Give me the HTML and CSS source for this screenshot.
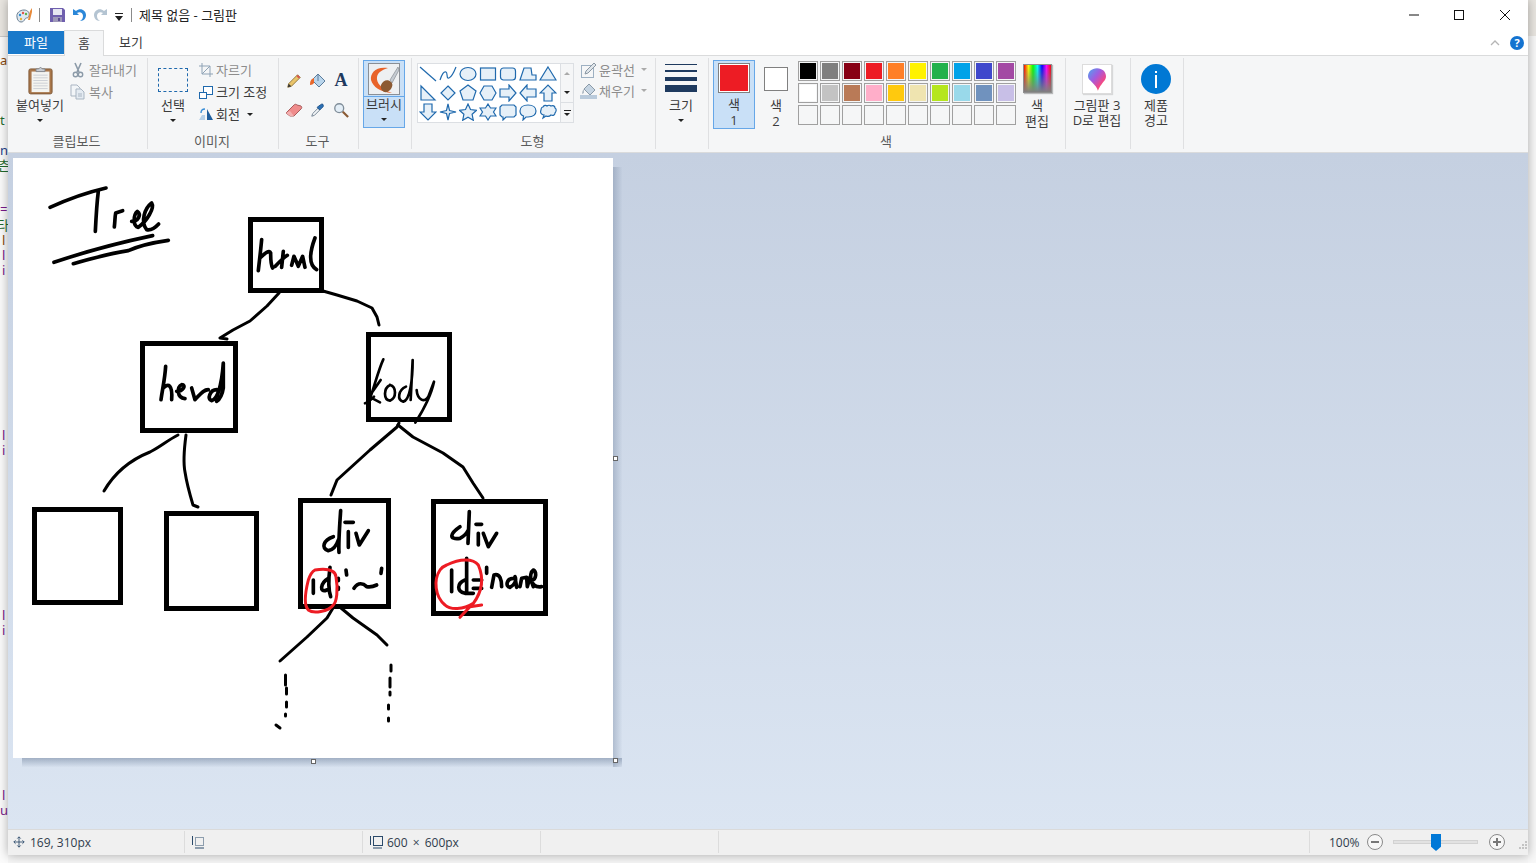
FILE: index.html
```html
<!DOCTYPE html>
<html lang="ko">
<head>
<meta charset="utf-8">
<title>제목 없음 - 그림판</title>
<link rel="stylesheet" href="styles.css">
</head>
<body>
<div class="desk">
  <svg class="sliver" width="8" height="863" viewBox="0 0 8 863">
    <text x="0" y="65" class="c-br">a</text>
    <text x="0" y="125" class="c-gr">t</text>
    <text x="0" y="155" class="c-bl">n</text>
    <text x="-2" y="170" class="c-gr">츤</text>
    <text x="0" y="214" class="c-pu">=</text>
    <text x="-3" y="230" class="c-gr">타</text>
    <text x="2" y="245" class="c-br">l</text>
    <text x="2" y="260" class="c-pu">l</text>
    <text x="2" y="275" class="c-pu">i</text>
    <text x="2" y="440" class="c-pu">l</text>
    <text x="2" y="455" class="c-pu">i</text>
    <text x="2" y="620" class="c-pu">l</text>
    <text x="2" y="635" class="c-pu">i</text>
    <text x="2" y="800" class="c-pu">l</text>
    <text x="0" y="815" class="c-pu">u</text>
  </svg>
  <div class="win">
    <header class="titlebar">
      <svg class="ic-app" width="17" height="17" viewBox="0 0 17 17"><path d="M1 10C0 6 4 3 8 3s6 3 5 6-3 1-4 3-2 3-4 3-4-2-4-5z" fill="#dfe8f0" stroke="#6b7f92"/><circle cx="4" cy="8" r="1.2" fill="#2d8fd5"/><circle cx="7" cy="6" r="1.2" fill="#e2534a"/><circle cx="10" cy="7" r="1.2" fill="#5cb04d"/><circle cx="5" cy="12" r="1.2" fill="#e8b23a"/><path d="M12 13l2-9 2-3 0 4-2 8z" fill="#e88a3a"/></svg>
      <span class="tsep"></span>
      <svg class="ic-save" width="15" height="14" viewBox="0 0 15 14"><path d="M0 0h13l2 2v12H0z" fill="#6f5fae"/><rect x="3" y="1" width="9" height="6" fill="#e6e6f2"/><rect x="3" y="9" width="9" height="5" fill="#9d97b8"/><rect x="8" y="10" width="2" height="3" fill="#5a4d92"/></svg>
      <svg class="ic-undo" width="14" height="14" viewBox="0 0 14 14"><path d="M1 1v6h6L5 5c3-2 6 0 6 3 0 2-1 4-3 5 4 0 6-3 6-6 0-5-6-8-10-4z" fill="#2b87d8"/></svg>
      <svg class="ic-redo" width="14" height="14" viewBox="0 0 14 14"><path d="M13 1v6H7l2-2C6 3 3 5 3 8c0 2 1 4 3 5-4 0-6-3-6-6 0-5 6-8 10-4z" fill="#b4c4d2"/></svg>
      <svg class="ic-qat" width="8" height="8" viewBox="0 0 8 8"><path d="M0 0h8v1H0zM0 3h8L4 8z" fill="#222"/></svg>
      <span class="tsep tsep2"></span>
      <span class="title">제목 없음 - 그림판</span>
      <div class="winbtns">
        <svg width="10" height="10" viewBox="0 0 10 10"><path d="M0 5h10" stroke="#111"/></svg>
        <svg width="10" height="10" viewBox="0 0 10 10"><rect x=".5" y=".5" width="9" height="9" fill="none" stroke="#111"/></svg>
        <svg class="ic-close" width="10" height="10" viewBox="0 0 10 10"><path d="M0 0l10 10M10 0L0 10" stroke="#111"/></svg>
      </div>
    </header>
    <nav class="tabs">
      <span class="tab tab-file">파일</span>
      <span class="tab tab-home">홈</span>
      <span class="tab tab-view">보기</span>
      <svg class="ic-collapse" width="10" height="6" viewBox="0 0 10 6"><path d="M1 5l4-4 4 4" fill="none" stroke="#b5b5b5" stroke-width="1.3"/></svg>
      <span class="help">?</span>
    </nav>
    <section class="ribbon">
      <div class="group g-clip">
        <div class="g-body">
          <div class="tall tall-clip">
            <div class="tall-ic">
              <svg width="25" height="31" viewBox="0 0 28 32"><rect x="1" y="3" width="26" height="28" rx="2" fill="#a9774a" stroke="#7a5432"/><rect x="4" y="6" width="20" height="23" fill="#f4f4f0"/><path d="M6 10h16M6 13h16M6 16h16M6 19h16M6 22h16M6 25h16" stroke="#c9ccd2"/><path d="M9 6V3h3l2-2 2 2h3v3z" fill="#c8ccd2" stroke="#80868e"/></svg>
            </div>
            <span>붙여넣기</span><i class="arrow"></i>
          </div>
          <div class="rows">
            <div class="row dim"><svg width="16" height="16" viewBox="0 0 16 16"><path d="M5 1l4 9M11 1L7 10" stroke="#8b9aa8" stroke-width="1.6"/><circle cx="5.500" cy="12.500" r="2.200" fill="none" stroke="#8b9aa8" stroke-width="1.400"/><circle cx="10.500" cy="12.500" r="2.200" fill="none" stroke="#8b9aa8" stroke-width="1.400"/></svg><span>잘라내기</span></div>
            <div class="row dim"><svg width="16" height="16" viewBox="0 0 16 16"><path d="M1 1h6l3 3v8H1z" fill="#f2f5f8" stroke="#a9b5c2"/><path d="M6 5h5l3 3v7H6z" fill="#e4ebf2" stroke="#a9b5c2"/><path d="M8 10h4M8 12h4" stroke="#a9b5c2"/></svg><span>복사</span></div>
          </div>
        </div>
        <div class="g-label">클립보드</div>
      </div>
      <div class="group g-image">
        <div class="g-body">
          <div class="tall tall-sel">
            <div class="tall-ic"><span class="dash"></span></div>
            <span>선택</span><i class="arrow"></i>
          </div>
          <div class="rows">
            <div class="row dim"><svg width="16" height="16" viewBox="0 0 16 16"><path d="M4 1v11h11M1 4h11v11" fill="none" stroke="#8fa3b6"/><path d="M4 12l8-8" stroke="#8fa3b6"/></svg><span>자르기</span></div>
            <div class="row"><svg width="16" height="16" viewBox="0 0 16 16"><rect x="5.500" y="2.500" width="9" height="8" fill="#fff" stroke="#1f69ad"/><rect x="1.500" y="8.500" width="7" height="6" fill="#fff" stroke="#1f69ad"/></svg><span>크기 조정</span></div>
            <div class="row"><svg width="16" height="16" viewBox="0 0 16 16"><path d="M9 3l6 11H9z" fill="#1f5f9e"/><path d="M1 14l3-5h3v5z" fill="#b5d0e8"/><path d="M3 7c0-3 2-4 4-4" fill="none" stroke="#3a8fd8" stroke-width="1.400"/></svg><span>회전</span><i class="arrow arrow-in"></i></div>
          </div>
        </div>
        <div class="g-label">이미지</div>
      </div>
      <div class="group g-tools">
        <div class="g-body tools">
          <svg width="16" height="16" viewBox="0 0 18 18"><path d="M2 16l1-4L13 2l3 3L6 15z" fill="#e9c46a" stroke="#8a6d2f"/><path d="M13 2l3 3-2 1-2-2z" fill="#d9534f"/><path d="M2 16l1-4 3 3z" fill="#333"/></svg>
          <svg width="18" height="18" viewBox="0 0 18 18"><path d="M9 2l7 7-6 6-7-7z" fill="#b9d5ec" stroke="#5c7d9c"/><path d="M9 2v7" stroke="#5c7d9c"/><path d="M1 13c0-4 1-6 4-7v5c-1 1-2 2-4 2z" fill="#e8682c"/></svg>
          <span class="tool-a">A</span>
          <svg width="18" height="16" viewBox="0 0 18 16"><path d="M1 11l8-8c1-1 2-1 3 0l4 1c1 1 1 2 0 3l-7 7H5z" fill="#ef8c8c" stroke="#a85c5c"/><path d="M1 11l4 3h4L5 9z" fill="#f3b0b0"/></svg>
          <svg width="16" height="16" viewBox="0 0 18 18"><path d="M2 16l1-3 6-6 2 2-6 6z" fill="#f1f4f7" stroke="#6b7c8c"/><path d="M8 6l4-3c1-1 3-1 3 1s-1 2-3 4l-1 1z" fill="#2a6fb4" stroke="#1b4f85"/></svg>
          <svg width="16" height="16" viewBox="0 0 18 18"><circle cx="7" cy="7" r="5" fill="#e3eef7" stroke="#7f8d99" stroke-width="1.500"/><path d="M11 11l6 6" stroke="#8a5a34" stroke-width="2.400"/></svg>
        </div>
        <div class="g-label">도구</div>
      </div>
      <div class="group g-brush">
        <div class="g-body">
          <div class="brushbtn">
            <div class="brush-top">
              <svg width="32" height="32" viewBox="0 0 32 32"><rect x=".5" y=".5" width="31" height="31" fill="#eef0f2" stroke="#8a8f96"/><path d="M20 5C8 3 2 10 3 17c2 7 9 12 21 13-10-4-16-10-15-16 1-5 5-7 11-9z" fill="#e8632a"/><path d="M22 17L30 4l1 3-7 13z" fill="#c5cbd2" stroke="#7b8087" stroke-width=".6"/><path d="M13 22c2-5 7-6 10-3 3 2 1 8-4 10-4 1-7-3-6-7z" fill="#8c5a33"/></svg>
            </div>
            <div class="brush-bot"><span>브러시</span><i class="arrow"></i></div>
          </div>
        </div>
        <div class="g-label">&nbsp;</div>
      </div>
      <div class="group g-shapes">
        <div class="g-body">
          <div class="gallery">
            <div class="shapes">
              <svg viewBox="0 0 18 18"><path d="M1 2l16 14"/></svg>
              <svg viewBox="0 0 18 18"><path class="nf" d="M1 15c2-6 4-9 6-8s0 7 3 6 5-6 7-11"/></svg>
              <svg viewBox="0 0 18 18"><ellipse cx="9" cy="9" rx="8" ry="6.500"/></svg>
              <svg viewBox="0 0 18 18"><rect x="1.500" y="3" width="15" height="12"/></svg>
              <svg viewBox="0 0 18 18"><rect x="1.500" y="3" width="15" height="12" rx="3"/></svg>
              <svg viewBox="0 0 18 18"><path d="M1 15L5 3h7l1 7h4v5z"/></svg>
              <svg viewBox="0 0 18 18"><path d="M9 2l8 13H1z"/></svg>
              <svg viewBox="0 0 18 18"><path d="M2 2l14 14H2z"/></svg>
              <svg viewBox="0 0 18 18"><path d="M9 2l7 7-7 7-7-7z"/></svg>
              <svg viewBox="0 0 18 18"><path d="M9 1l8 6-3 9H4L1 7z"/></svg>
              <svg viewBox="0 0 18 18"><path d="M5 2h8l4 7-4 7H5L1 9z"/></svg>
              <svg viewBox="0 0 18 18"><path d="M1 5h9V1l7 8-7 8v-4H1z"/></svg>
              <svg viewBox="0 0 18 18"><path d="M17 5H8V1L1 9l7 8v-4h9z"/></svg>
              <svg viewBox="0 0 18 18"><path d="M5 17V9H1l8-8 8 8h-4v8z"/></svg>
              <svg viewBox="0 0 18 18"><path d="M5 1v8H1l8 8 8-8h-4V1z"/></svg>
              <svg viewBox="0 0 18 18"><path d="M9 1l1.500 6.500L17 9l-6.500 1.500L9 17l-1.500-6.500L1 9l6.500-1.500z"/></svg>
              <svg viewBox="0 0 18 18"><path d="M9 1l2.500 5.500 6 .8-4.400 4 1.200 6L9 14.300 3.700 17.300l1.200-6-4.400-4 6-.8z"/></svg>
              <svg viewBox="0 0 18 18"><path d="M9 1l2.500 4H17l-2.500 4 2.500 4h-5.500L9 17l-2.500-4H1l2.500-4L1 5h5.500z"/></svg>
              <svg viewBox="0 0 18 18"><path d="M3 2h12l2 2v8l-2 2H7l-3 3v-3H3l-2-2V4z"/></svg>
              <svg viewBox="0 0 18 18"><path d="M9 2c5 0 8 2.500 8 6s-3 6-8 6H7l-3 3 .5-4C2 12 1 10 1 8c0-3.500 3-6 8-6z"/></svg>
              <svg viewBox="0 0 18 18"><path d="M4 4c1-2 3-2 4-1 1-1 3-1 4 0 2-1 4 0 4 2 2 1 1 4 0 5 0 2-2 3-4 2-1 1-3 2-5 1l-3 2 1-3c-3 0-4-3-3-5 0-2 1-3 2-3z"/></svg>
            </div>
            <div class="gscroll">
              <span class="gs gs-up"><i class="tri-up"></i></span>
              <span class="gs"><i class="arrow"></i></span>
              <span class="gs gs-more"><i class="bar"></i><i class="arrow"></i></span>
            </div>
          </div>
          <div class="sh-opts">
            <div class="row dim"><svg width="18" height="18" viewBox="0 0 18 18"><rect x="1.500" y="4.500" width="12" height="12" fill="none" stroke="#9db0c2"/><path d="M5 13l1-3 8-8 2 2-8 8z" fill="#dfe5ea" stroke="#8a97a3"/></svg><span>윤곽선</span><i class="arrow arrow-in arrow-dim"></i></div>
            <div class="row dim"><svg width="18" height="18" viewBox="0 0 18 18"><path d="M9 2l6 6-5 5-6-6z" fill="#c5d4e2" stroke="#8a9aa8"/><rect x="0" y="13" width="17" height="4" fill="#b9cadb"/><path d="M2 12c0-3 1-4 2-5v4z" fill="#b1bcc6"/></svg><span>채우기</span><i class="arrow arrow-in arrow-dim"></i></div>
          </div>
        </div>
        <div class="g-label">도형</div>
      </div>
      <div class="group g-size">
        <div class="g-body">
          <div class="tall tall-size">
            <div class="lines"><i class="l1"></i><i class="l2"></i><i class="l3"></i><i class="l4"></i></div>
            <span>크기</span><i class="arrow"></i>
          </div>
        </div>
        <div class="g-label">&nbsp;</div>
      </div>
      <div class="group g-colors">
        <div class="g-body">
          <div class="col1">
            <div class="sw1"><i></i></div>
            <span>색</span><span>1</span>
          </div>
          <div class="col2">
            <div class="sw2"></div>
            <span>색</span><span>2</span>
          </div>
          <div class="palette">
            <i class="cell"><b class="p1"></b></i><i class="cell"><b class="p2"></b></i><i class="cell"><b class="p3"></b></i><i class="cell"><b class="p4"></b></i><i class="cell"><b class="p5"></b></i><i class="cell"><b class="p6"></b></i><i class="cell"><b class="p7"></b></i><i class="cell"><b class="p8"></b></i><i class="cell"><b class="p9"></b></i><i class="cell"><b class="p10"></b></i>
            <i class="cell"><b class="p11"></b></i><i class="cell"><b class="p12"></b></i><i class="cell"><b class="p13"></b></i><i class="cell"><b class="p14"></b></i><i class="cell"><b class="p15"></b></i><i class="cell"><b class="p16"></b></i><i class="cell"><b class="p17"></b></i><i class="cell"><b class="p18"></b></i><i class="cell"><b class="p19"></b></i><i class="cell"><b class="p20"></b></i>
            <i class="cell"></i><i class="cell"></i><i class="cell"></i><i class="cell"></i><i class="cell"></i><i class="cell"></i><i class="cell"></i><i class="cell"></i><i class="cell"></i><i class="cell"></i>
          </div>
          <div class="coledit">
            <div class="rainbow"></div>
            <span>색</span><span>편집</span>
          </div>
        </div>
        <div class="g-label">색</div>
      </div>
      <div class="group g-p3d">
        <div class="g-body">
          <div class="coltxt">
            <div class="p3d-box">
              <svg width="18" height="25" viewBox="0 0 20 25"><defs><linearGradient id="p3" x1="0" y1="0" x2="1" y2="1"><stop offset="0" stop-color="#4aa8f0"/><stop offset=".4" stop-color="#a25be0"/><stop offset=".7" stop-color="#f0488a"/><stop offset="1" stop-color="#f8b020"/></linearGradient></defs><path d="M10 0c6 0 10 4 10 9 0 4-3 6-5 9-2 2-3 5-4 7-1-4-3-6-6-9C2 13 0 12 0 9c0-5 4-9 10-9z" fill="url(#p3)"/></svg>
            </div>
            <span>그림판 3</span><span>D로 편집</span>
          </div>
        </div>
        <div class="g-label">&nbsp;</div>
      </div>
      <div class="group g-warn">
        <div class="g-body">
          <div class="coltxt">
            <div class="info"><i class="info-dot"></i><i class="info-bar"></i></div>
            <span>제품</span><span>경고</span>
          </div>
        </div>
        <div class="g-label">&nbsp;</div>
      </div>
    </section>
    <main class="work">
      <div class="canvas">
        <svg class="draw" width="600" height="600" viewBox="13 158 600 600">
          <g class="ink">
            <rect class="box" x="250.500" y="219.500" width="71" height="71"/>
            <rect class="box" x="142.500" y="343.500" width="93" height="87"/>
            <rect class="box" x="368.500" y="334.500" width="81" height="85"/>
            <rect class="box" x="34.500" y="509.500" width="86" height="93"/>
            <rect class="box" x="166.500" y="513.500" width="90" height="95"/>
            <rect class="box" x="300.500" y="500.500" width="88" height="106"/>
            <rect class="box" x="433.500" y="501.500" width="112" height="112"/>
            <path d="M279 293L267 306 250 321 233 330 220 338 227 339"/>
            <path d="M323 291L337 295 357 301 372 308 377 317 379 325"/>
            <path d="M178 435C168 440 160 447 150 452 130 460 115 472 104 491"/>
            <path d="M186 435C184 450 183 462 185 472 187 485 190 495 193 505L198 507"/>
            <path d="M399 423L397 427 370 450 337 480 331 495"/>
            <path d="M398 425L413 437 443 453 463 467 473 483 483 498"/>
            <path d="M333 608L327 618 307 637 280 661"/>
            <path d="M341 608L353 618 377 635 387 645"/>
            <path d="M285.500 675V685M286.500 688V694M286.500 702V707M285.500 714V716M276 725L280 728"/>
            <path d="M391 665V671M390 678V687M390 692V695M388.500 705V709M388.500 718V721"/>
          </g>
          <g class="ink z" transform="translate(0 158) scale(.3333)">
            <path d="M150 148C190 130 240 108 318 90M295 100C290 140 288 180 286 220"/>
            <path d="M343 207C345 190 345 175 347 165L368 158"/>
            <path d="M395 190C415 190 425 170 412 160 400 170 398 205 415 208 440 190 465 150 455 135 435 150 420 190 440 215 455 218 465 210 476 198"/>
            <path d="M162 313C230 290 330 260 458 233M220 317C280 300 340 285 385 278 420 262 470 252 505 247"/>
            <path d="M785 245C782 280 778 310 775 338M780 300C795 285 808 275 812 285 812 300 812 320 818 330M826 325C838 312 850 300 862 292M850 280L845 328M875 322L882 295 895 325 908 295 915 328M945 240C930 280 925 320 950 335"/>
            <path d="M497 625C495 660 488 690 483 725M490 690C505 675 518 680 515 725M530 700C550 700 560 680 545 680 530 685 530 720 555 722M575 690L585 725C600 710 610 695 625 695M650 695C630 695 620 725 635 728 650 725 665 690 670 615L670 690C668 705 660 725 650 730"/>
          </g>
          <g class="ink z thin" transform="translate(300 200) scale(.3333)">
            <path d="M250 478C235 510 220 570 205 610M195 610C205 608 212 600 222 590M242 540L207 590 240 607M270 555C250 565 250 600 270 602 290 595 290 560 270 555M318 560C295 570 290 600 310 605 330 600 338 540 338 480L332 600M350 570C352 600 375 610 385 590L402 545C395 580 370 630 346 668"/>
          </g>
          <g class="ink z" transform="translate(270 490) scale(.3333)">
            <path d="M190 140C160 150 152 175 175 182 190 180 200 165 205 150M212 62C208 120 205 160 207 187M235 125V172M225 97H250M258 130L268 165 295 122"/>
            <path d="M130 270V310M180 232C175 270 175 300 182 320M175 265C150 280 148 310 170 300M205 265V272M205 292V298M228 240L230 255M252 295C265 275 280 280 290 290 300 292 310 290 320 285M335 235L333 250"/>
            <path d="M598 65L594 160M570 110C540 130 535 150 570 145 580 140 590 130 595 120M625 130V165M618 103H635M640 130L655 170 680 130"/>
            <path d="M545 240V305M590 205V305M585 270C560 280 560 305 585 310H610M610 270H635M610 295H635M650 232L650 250M665 292L672 255C690 250 695 270 695 290M730 265C710 265 705 290 720 292 735 285 740 270 735 260L740 292M750 290L755 265 770 262 772 290 780 262 790 290M785 270C800 270 800 245 790 240 775 250 780 295 815 290"/>
          </g>
          <g class="red z" transform="translate(270 490) scale(.3333)">
            <path d="M135 240C170 235 195 240 198 260 205 300 200 335 190 345 175 365 130 372 115 360 100 345 105 310 115 270 120 255 125 245 135 240"/>
            <path d="M530 225C570 205 610 205 625 225 640 260 640 300 610 340 580 360 540 360 525 345 495 320 490 270 510 240 515 232 522 228 530 225M635 345L600 350 570 382"/>
          </g>
        </svg>
        <i class="handle h-r"></i><i class="handle h-b"></i><i class="handle h-c"></i>
      </div>
    </main>
    <footer class="status">
      <div class="st st1"><svg width="12" height="12" viewBox="0 0 14 14"><path d="M7 1v12M1 7h12M5 3l2-2 2 2M5 11l2 2 2-2M3 5L1 7l2 2M11 5l2 2-2 2" fill="none" stroke="#2b4a6a"/></svg><span>169, 310px</span></div>
      <div class="st st2"><svg width="14" height="14" viewBox="0 0 14 14"><rect x="4.500" y="2.500" width="8" height="8" fill="none" stroke="#2b4a6a" stroke-dasharray="1 1"/><path d="M1.500 1v9M4 13h9" stroke="#2b4a6a"/></svg></div>
      <div class="st st3"><svg width="14" height="14" viewBox="0 0 14 14"><rect x="4.500" y="1.500" width="9" height="9" fill="none" stroke="#2b4a6a"/><path d="M1.500 1v9M4 13h9" stroke="#2b4a6a"/></svg><span class="dims">600 × 600px</span></div>
      <div class="st st4"></div>
      <div class="st st5"></div>
      <div class="st6">
        <span class="zoomtxt">100%</span>
        <span class="zbtn"><i class="zh"></i></span>
        <span class="track"><i class="thumb"></i></span>
        <span class="zbtn zplus"><i class="zh"></i><i class="zv"></i></span>
        <svg class="grip" width="10" height="10" viewBox="0 0 10 10"><path d="M7 1h2v2H7zM4 4h2v2H4zM7 4h2v2H7zM1 7h2v2H1zM4 7h2v2H4zM7 7h2v2H7z" fill="#c3c3c3"/></svg>
      </div>
    </footer>
  </div>
  <div class="rside"></div>
</div>
</body>
</html>
```
FILE: styles.css
```css
* { box-sizing: border-box; }
html, body { margin: 0; padding: 0; height: 100%; overflow: hidden; }
body { font-family: "Open Sans", "Noto Sans CJK KR", sans-serif; font-size: 13px; color: #3c3c3c; background: #fff; }
i { display: block; font-style: normal; }
svg { display: block; flex: none; }

.desk { display: flex; width: 1536px; height: 863px; background: #f6f6f6; overflow: hidden; }
.sliver { font: 13px "Noto Sans", "Noto Sans CJK KR", sans-serif; background: linear-gradient(#e9e6e1 36px, #c9c9c9 36px, #c9c9c9 37px, #fbfbfb 37px); }
.c-br { fill: #8a4a10; } .c-gr { fill: #1f6b2d; } .c-bl { fill: #1f3f8a; } .c-pu { fill: #7a1a8a; }
.win { width: 1520px; height: 855px; flex: none; display: flex; flex-direction: column; background: #fff; box-shadow: 0 0 10px rgba(0,0,0,.32); position: relative; }
.rside { flex: 1; background: linear-gradient(#e9e6e1 36px, #f8f8f8 36px); }

/* title bar */
.titlebar { height: 30px; flex: none; display: flex; align-items: center; padding-left: 8px; color: #222; }
.tsep { width: 1px; height: 14px; background: #8a8a8a; margin-left: 6px; margin-right: 10px; }
.ic-undo { margin-left: 7px; }
.ic-redo { margin-left: 8px; }
.ic-qat { margin-left: 7px; margin-top: 4px; }
.tsep2 { margin-left: 8px; margin-right: 7px; }
.title { margin-bottom: 2px; }
.winbtns { margin-left: auto; display: flex; gap: 35px; margin-right: 18px; }
.ic-close { margin-left: 1px; }

/* tabs */
.tabs { height: 26px; flex: none; display: flex; align-items: stretch; border-bottom: 1px solid #dadbdc; position: relative; }
.tab { display: flex; align-items: center; justify-content: center; height: 25px; padding-bottom: 2px; color: #3c3c3c; }
.tab-file { width: 56px; background: #1979ca; color: #fff; margin-top: 1px; height: 23px; }
.tab-home { width: 40px; background: #f5f6f7; border: 1px solid #dadbdc; border-bottom: 0; height: 26px; z-index: 1; }
.tab-view { width: 54px; }
.ic-collapse { margin-left: auto; align-self: center; margin-right: 10px; }
.help { width: 14px; height: 14px; border-radius: 50%; background: #1473d0; color: #fff; font: bold 11px/14px "Open Sans", sans-serif; text-align: center; align-self: center; margin-right: 4px; }

/* ribbon */
.ribbon { height: 97px; flex: none; display: flex; background: #f5f6f7; border-bottom: 1px solid #dadbdc; padding-top: 2px; }
.group { height: 91px; border-right: 1px solid #dfe0e2; display: flex; flex-direction: column; flex: none; }
.g-body { height: 75px; display: flex; }
.g-label { height: 16px; line-height: 16px; text-align: center; color: #5a5a5a; padding-right: 2px; }
.g-clip { width: 140px; } .g-image { width: 131px; } .g-tools { width: 80px; } .g-brush { width: 53px; }
.g-shapes { width: 244px; } .g-size { width: 53px; } .g-colors { width: 357px; } .g-p3d { width: 65px; } .g-warn { width: 53px; }

.tall { display: flex; flex-direction: column; align-items: center; line-height: 15px; }
.tall-ic { height: 40px; display: flex; align-items: center; justify-content: center; padding-top: 5px; }
.tall-clip { width: 62px; padding-left: 2px; }
.tall-sel { width: 50px; }
.arrow { width: 0; height: 0; border: 3px solid transparent; border-top: 3px solid #222; border-bottom: 0; margin-top: 6px; }
.arrow-in { margin: 0 0 0 5px; }
.arrow-dim { border-top-color: #aaa; }
.rows { display: flex; flex-direction: column; padding-top: 1px; }
.row { height: 22px; display: flex; align-items: center; gap: 3px; color: #3c3c3c; white-space: nowrap; }
.rows .row span { margin-bottom: 2px; }
.g-image .row { gap: 2px; }
.dim { color: #8d8d8d; }
.dash { width: 30px; height: 24px; border: 1px dashed #1f69ad; margin-top: -2px; }

.tools { display: grid; grid-template-columns: 24px 23px 24px; grid-auto-rows: 29px; padding: 8px 0 0 3px; justify-items: center; align-items: center; }
.tool-a { font: bold 18px "Liberation Serif", serif; color: #1f3a5f; }

.brushbtn { width: 42px; height: 68px; margin: 2px 0 0 4px; background: #c9e0f7; border: 1px solid #66a7e8; display: flex; flex-direction: column; align-items: center; }
.brush-top { height: 36px; width: 100%; border-bottom: 1px solid #66a7e8; display: flex; justify-content: center; padding-top: 2px; }
.brush-bot { display: flex; flex-direction: column; align-items: center; line-height: 15px; white-space: nowrap; }

.g-shapes .g-body { padding: 5px 0 0 5px; gap: 6px; }
.gallery { width: 157px; height: 60px; border: 1px solid #dcdfe3; background: #fff; display: flex; }
.shapes { width: 142px; height: 58px; display: grid; grid-template-columns: repeat(7, 20px); grid-template-rows: repeat(3, 1fr); justify-items: center; align-items: center; }
.shapes svg { width: 18px; height: 18px; fill: #e6f0f8; stroke: #1f69ad; stroke-width: 1.200; }
.shapes .nf { fill: none; }
.gscroll { flex: 1; display: flex; flex-direction: column; background: #f5f6f7; border-left: 1px solid #dcdfe3; }
.gs { flex: 1; display: flex; flex-direction: column; align-items: center; justify-content: center; }
.gs .arrow { margin-top: 0; }
.gs-more { border-top: 1px solid #dcdfe3; gap: 2px; }
.tri-up { width: 0; height: 0; border: 3px solid transparent; border-bottom: 3px solid #aaa; border-top: 0; }
.bar { width: 7px; height: 1px; background: #222; }
.sh-opts { display: flex; flex-direction: column; margin-top: -4px; }
.sh-opts .row { height: 21px; gap: 1px; }

.tall-size { width: 50px; }
.lines { width: 32px; height: 40px; padding-top: 6px; display: flex; flex-direction: column; }
.lines i { background: #1e3a5f; }
.l1 { height: 1px; } .l2 { height: 2px; margin-top: 5px; } .l3 { height: 4px; margin-top: 5px; } .l4 { height: 7px; margin-top: 4px; }

.col1 { width: 42px; height: 69px; margin: 2px 0 0 4px; background: #c9e0f7; border: 1px solid #66a7e8; display: flex; flex-direction: column; align-items: center; line-height: 16px; }
.sw1 { width: 32px; height: 32px; border: 1px solid #808080; padding: 1px; margin: 2px 0 3px; background: #fff; }
.sw1 i { width: 100%; height: 100%; background: #ed1c24; }
.col2 { width: 42px; display: flex; flex-direction: column; align-items: center; line-height: 16px; padding-top: 9px; }
.sw2 { width: 24px; height: 24px; background: #fff; border: 1px solid #808080; margin-bottom: 6px; }
.palette { width: 220px; margin-left: 1px; padding-top: 3px; display: grid; grid-template-columns: repeat(10, 20px); grid-auto-rows: 20px; gap: 2px; align-self: start; }
.cell { border: 1px solid #a0a0a0; padding: 1px; }
.cell b { display: block; width: 100%; height: 100%; }
.p1{background:#000}.p2{background:#7f7f7f}.p3{background:#880015}.p4{background:#ed1c24}.p5{background:#ff7f27}.p6{background:#fff200}.p7{background:#22b14c}.p8{background:#00a2e8}.p9{background:#3f48cc}.p10{background:#a349a4}
.p11{background:#fff}.p12{background:#c3c3c3}.p13{background:#b97a57}.p14{background:#ffaec9}.p15{background:#ffc90e}.p16{background:#efe4b0}.p17{background:#b5e61d}.p18{background:#99d9ea}.p19{background:#7092be}.p20{background:#c8bfe7}
.coledit { width: 38px; display: flex; flex-direction: column; align-items: center; line-height: 16px; padding-top: 6px; }
.rainbow { width: 29px; height: 29px; border: 1px solid #8f8f8f; margin-bottom: 4px; background: linear-gradient(transparent, #808080), linear-gradient(90deg, #f00, #ff0, #0f0, #0ff, #00f, #f0f, #f00); box-shadow: 1px 1px 1px rgba(0,0,0,.25); }
.coltxt { width: 100%; display: flex; flex-direction: column; align-items: center; line-height: 15px; padding: 6px 2px 0 0; white-space: nowrap; }
.p3d-box { width: 30px; height: 30px; background: #fff; border: 1px solid #dcdcdc; margin-bottom: 4px; display: flex; align-items: center; justify-content: center; box-shadow: 1px 1px 1px rgba(0,0,0,.12); }
.info { width: 30px; height: 30px; border-radius: 50%; background: #0078d4; margin-bottom: 4px; display: flex; flex-direction: column; align-items: center; padding-top: 7px; gap: 2px; }
.info-dot { width: 2px; height: 2px; background: #fff; }
.info-bar { width: 2px; height: 13px; background: #fff; }

/* work area */
.work { flex: 1; min-height: 0; padding: 5px; background: linear-gradient(#c5d0e1, #dbe5f2); }
.canvas { width: 600px; height: 600px; background: #fff; position: relative; }
.canvas::before { content: ""; position: absolute; left: 600px; top: 9px; width: 9px; height: 600px; background: linear-gradient(90deg, rgba(85,105,135,.3), rgba(85,105,135,.02)); }
.canvas::after { content: ""; position: absolute; left: 9px; top: 600px; width: 600px; height: 9px; background: linear-gradient(rgba(85,105,135,.42), rgba(85,105,135,.02)); }
.draw { position: absolute; inset: 0; }
.ink path { fill: none; stroke: #000; stroke-width: 3; stroke-linecap: round; stroke-linejoin: round; }
.box { fill: none; stroke: #000; stroke-width: 5; }
.z path { stroke-width: 11; }
.thin path { stroke-width: 8; }
.red path { fill: none; stroke: #ed1c24; stroke-width: 9; stroke-linecap: round; stroke-linejoin: round; }
.handle { position: absolute; width: 5px; height: 5px; background: #fff; border: 1px solid #666; z-index: 1; }
.h-r { left: 600px; top: 298px; }
.h-b { left: 298px; top: 601px; }
.h-c { left: 600px; top: 600px; }

/* status */
.status { height: 26px; flex: none; display: flex; background: #f0f0f0; border-top: 1px solid #dadada; padding: 1px 0 2px; color: #2f3c4c; font-size: 12px; }
.st { height: 100%; border-right: 1px solid #dcdcdc; display: flex; align-items: center; gap: 5px; padding-left: 5px; flex: none; white-space: nowrap; }
.st1 { width: 177px; } .st2 { width: 178px; padding-left: 6px; } .st3 { width: 178px; padding-left: 6px; gap: 4px; } .st4 { width: 178px; } .st5 { width: 591px; }
.dims { word-spacing: 2px; }
.st6 { flex: 1; display: flex; align-items: center; padding-left: 19px; }
.zoomtxt { width: 37px; }
.zbtn { width: 16px; height: 16px; border: 1px solid #8a8a8a; border-radius: 50%; background: #f7f7f7; position: relative; margin-left: 1px; }
.zh { position: absolute; left: 3px; top: 6px; width: 8px; height: 2px; background: #777; }
.zv { position: absolute; left: 6px; top: 3px; width: 2px; height: 8px; background: #777; }
.track { width: 85px; height: 4px; background: #e2e2e2; border: 1px solid #d2d2d2; margin: 0 11px 0 10px; position: relative; }
.thumb { position: absolute; left: 37px; top: -7px; width: 10px; height: 17px; background: #0078d7; clip-path: polygon(0 0, 100% 0, 100% 75%, 50% 100%, 0 75%); }
.zplus { margin-left: 0; }
.grip { margin-left: 13px; margin-top: 6px; }
```
